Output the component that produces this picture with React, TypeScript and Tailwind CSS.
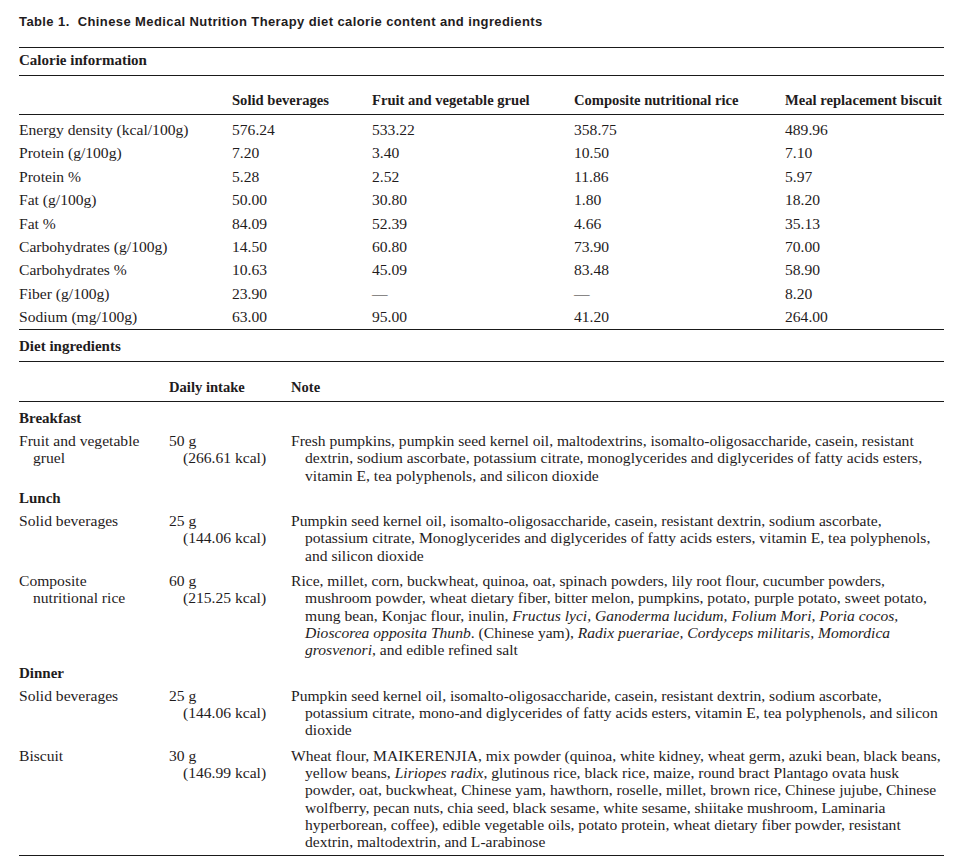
import type { ReactNode } from "react";

const serif = "font-['Liberation_Serif','Times_New_Roman',serif]";

const calorieCols = [
  "Solid beverages",
  "Fruit and vegetable gruel",
  "Composite nutritional rice",
  "Meal replacement biscuit",
];

const calorieRows: [string, string[]][] = [
  ["Energy density (kcal/100g)", ["576.24", "533.22", "358.75", "489.96"]],
  ["Protein (g/100g)", ["7.20", "3.40", "10.50", "7.10"]],
  ["Protein %", ["5.28", "2.52", "11.86", "5.97"]],
  ["Fat (g/100g)", ["50.00", "30.80", "1.80", "18.20"]],
  ["Fat %", ["84.09", "52.39", "4.66", "35.13"]],
  ["Carbohydrates (g/100g)", ["14.50", "60.80", "73.90", "70.00"]],
  ["Carbohydrates %", ["10.63", "45.09", "83.48", "58.90"]],
  ["Fiber (g/100g)", ["23.90", "—", "—", "8.20"]],
  ["Sodium (mg/100g)", ["63.00", "95.00", "41.20", "264.00"]],
];

type Item = { name: string[]; intake: string[]; note: ReactNode[] };
type Meal = { meal: string; items: Item[] };

const meals: Meal[] = [
  {
    meal: "Breakfast",
    items: [
      {
        name: ["Fruit and vegetable", "gruel"],
        intake: ["50 g", "(266.61 kcal)"],
        note: [
          "Fresh pumpkins, pumpkin seed kernel oil, maltodextrins, isomalto-oligosaccharide, casein, resistant",
          "dextrin, sodium ascorbate, potassium citrate, monoglycerides and diglycerides of fatty acids esters,",
          "vitamin E, tea polyphenols, and silicon dioxide",
        ],
      },
    ],
  },
  {
    meal: "Lunch",
    items: [
      {
        name: ["Solid beverages"],
        intake: ["25 g", "(144.06 kcal)"],
        note: [
          "Pumpkin seed kernel oil, isomalto-oligosaccharide, casein, resistant dextrin, sodium ascorbate,",
          "potassium citrate, Monoglycerides and diglycerides of fatty acids esters, vitamin E, tea polyphenols,",
          "and silicon dioxide",
        ],
      },
      {
        name: ["Composite", "nutritional rice"],
        intake: ["60 g", "(215.25 kcal)"],
        note: [
          "Rice, millet, corn, buckwheat, quinoa, oat, spinach powders, lily root flour, cucumber powders,",
          "mushroom powder, wheat dietary fiber, bitter melon, pumpkins, potato, purple potato, sweet potato,",
          <>
            mung bean, Konjac flour, inulin, <i>Fructus lyci, Ganoderma lucidum, Folium Mori, Poria cocos,</i>
          </>,
          <>
            <i>Dioscorea opposita Thunb</i>. (Chinese yam), <i>Radix puerariae, Cordyceps militaris, Momordica</i>
          </>,
          <>
            <i>grosvenori</i>, and edible refined salt
          </>,
        ],
      },
    ],
  },
  {
    meal: "Dinner",
    items: [
      {
        name: ["Solid beverages"],
        intake: ["25 g", "(144.06 kcal)"],
        note: [
          "Pumpkin seed kernel oil, isomalto-oligosaccharide, casein, resistant dextrin, sodium ascorbate,",
          "potassium citrate, mono-and diglycerides of fatty acids esters, vitamin E, tea polyphenols, and silicon",
          "dioxide",
        ],
      },
      {
        name: ["Biscuit"],
        intake: ["30 g", "(146.99 kcal)"],
        note: [
          "Wheat flour, MAIKERENJIA, mix powder (quinoa, white kidney, wheat germ, azuki bean, black beans,",
          <>
            yellow beans, <i>Liriopes radix</i>, glutinous rice, black rice, maize, round bract Plantago ovata husk
          </>,
          "powder, oat, buckwheat, Chinese yam, hawthorn, roselle, millet, brown rice, Chinese jujube, Chinese",
          "wolfberry, pecan nuts, chia seed, black sesame, white sesame, shiitake mushroom, Laminaria",
          "hyperborean, coffee), edible vegetable oils, potato protein, wheat dietary fiber powder, resistant",
          "dextrin, maltodextrin, and L-arabinose",
        ],
      },
    ],
  },
];

// first line flush, the rest hang by 14px
function Lines({ lines }: { lines: ReactNode[] }) {
  return (
    <div>
      {lines.map((l, i) => (
        <div key={i} className={i === 0 ? "whitespace-nowrap" : "whitespace-nowrap pl-[14px]"}>
          {l}
        </div>
      ))}
    </div>
  );
}

function Rule() {
  return <div className="h-px bg-[#1a1a1a]" />;
}

export default function App() {
  return (
    <div className="min-h-screen bg-white text-[#1f1c1d]">
      <div className="w-[944px] pl-[19px] pt-[15px]">
        <p className="font-['Liberation_Sans',Arial,sans-serif] text-[13px] font-bold leading-[14px] tracking-[0.4px] whitespace-pre">
          Table 1.  Chinese Medical Nutrition Therapy diet calorie content and ingredients
        </p>

        <div className={`${serif} mt-[18px] text-[15.6px] leading-[17px]`}>
          <Rule />
          {/* Calorie information */}
          <div className="pt-[4px] pb-[6px] text-[15px] font-bold">Calorie information</div>
          <Rule />
          <div className="grid grid-cols-[213px_140px_202px_211px_1fr] pt-[16px] pb-[5px] text-[14.6px] font-bold">
            <div />
            {calorieCols.map((c) => (
              <div key={c} className="whitespace-nowrap">
                {c}
              </div>
            ))}
          </div>
          <Rule />
          <div className="pt-[3px]">
            {calorieRows.map(([label, vals]) => (
              <div
                key={label}
                className="grid grid-cols-[213px_140px_202px_211px_1fr] leading-[23.4px]"
              >
                <div className="whitespace-nowrap">{label}</div>
                {vals.map((v, i) => (
                  <div key={i}>{v}</div>
                ))}
              </div>
            ))}
          </div>
          <Rule />

          {/* Diet ingredients */}
          <div className="pt-[8px] pb-[6px] text-[15px] font-bold">Diet ingredients</div>
          <Rule />
          <div className="grid grid-cols-[150px_122px_1fr] pt-[17px] pb-[5px] text-[14.6px] font-bold">
            <div />
            <div>Daily intake</div>
            <div>Note</div>
          </div>
          <Rule />
          <div className="pt-[5px] pb-[2px] leading-[17.3px]">
            {meals.map((m) => (
              <div key={m.meal}>
                <div className="pt-[3px] text-[15px] font-bold">{m.meal}</div>
                {m.items.map((it, i) => (
                  <div key={i} className="grid grid-cols-[150px_122px_1fr] pt-[5px] pb-[3px]">
                    <Lines lines={it.name} />
                    <Lines lines={it.intake} />
                    <div className="text-[15.6px]">
                      <Lines lines={it.note} />
                    </div>
                  </div>
                ))}
              </div>
            ))}
          </div>
          <Rule />
        </div>
      </div>
    </div>
  );
}
